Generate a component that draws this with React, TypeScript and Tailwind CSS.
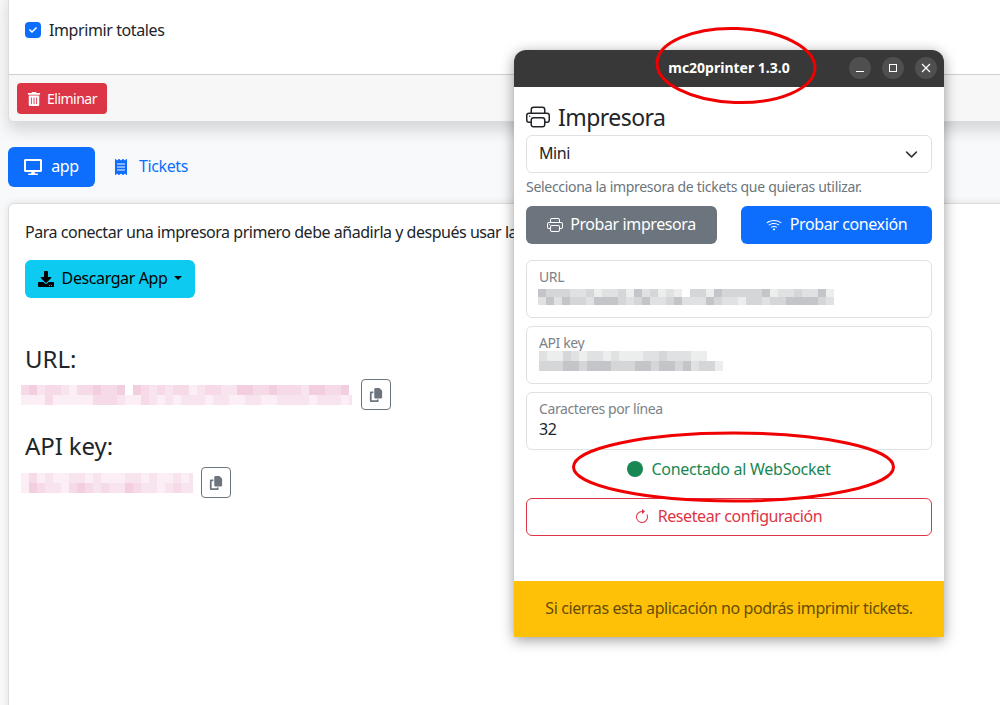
import React from 'react';
import { BsArrowClockwise, BsPrinter, BsWifi } from 'react-icons/bs';
import { FaCheck, FaDesktop, FaDownload, FaReceipt, FaTrashAlt } from 'react-icons/fa';
import { FaCopy } from 'react-icons/fa6';

const PINK = ['#ffffff', '#fbeff5', '#f8e4ee', '#f6dae8', '#f3cde0'];
const GRAY = ['#ffffff', '#eceded', '#e0e1e3', '#d4d6d8', '#c4c5c8'];

const URL_PINK = [
    '3423321334334' + '0' + '432323312332244334333244334',
    '111311111333211321212221221122112222122212',
];
const KEY_PINK = [
    '13121122121112212112121',
    '14322134323224322123223',
];
const URL_GRAY = [
    '4333223122314231210331433333412232241',
    '2424332444323422342224322133233444432',
];
const KEY_GRAY = [
    '21132122121112232221100',
    '33344344433344344342331',
];

// blurred-out values in the screenshot
function Pixelated({ rows, palette, rowHeight, className }: { rows: string[]; palette: string[]; rowHeight: number; className?: string }) {
    return (
        <div className={`shrink-0 overflow-hidden ${className ?? ''}`}>
            {rows.map((row, r) => (
                <div key={r} className="flex">
                    {row.split('').map((c, i) => (
                        <div key={i} className="w-2 shrink-0" style={{ height: rowHeight, backgroundColor: palette[Number(c)] }} />
                    ))}
                </div>
            ))}
        </div>
    );
}

function CopyButton() {
    return (
        <button className="flex h-[31px] w-[30px] shrink-0 items-center justify-center rounded border border-[#6c757d] text-[#6c757d]">
            <FaCopy className="size-[14px]" />
        </button>
    );
}

function FloatingField({ label, children }: { label: string; children: React.ReactNode }) {
    return (
        <div className="h-[58px] rounded-md border border-[#dee2e6] px-3 pt-[6px]">
            <div className="text-sm leading-5 text-[#7d8287]">{label}</div>
            {children}
        </div>
    );
}

function Printer20Window() {
    return (
        <div className="absolute left-[514px] top-[50px] flex h-[587px] w-[430px] flex-col overflow-hidden rounded-t-xl bg-white shadow-[0_3px_14px_rgba(0,0,0,0.4)]">
            <div className="relative flex h-[37px] shrink-0 items-center justify-center bg-[#383838]">
                <span className="pb-px text-sm font-bold tracking-normal text-white">mc20printer 1.3.0</span>
                <div className="absolute right-[7px] top-[7px] flex gap-[11px]">
                    <div className="flex size-[22px] items-center justify-center rounded-full bg-[#4f4f4f]">
                        <div className="mt-[7px] h-px w-2 bg-white" />
                    </div>
                    <div className="flex size-[22px] items-center justify-center rounded-full bg-[#4f4f4f]">
                        <div className="size-2 border border-white" />
                    </div>
                    <div className="flex size-[22px] items-center justify-center rounded-full bg-[#4f4f4f]">
                        <svg viewBox="0 0 10 10" className="size-[10px]" stroke="white" strokeWidth="1.2"><path d="M1 1l8 8M9 1l-8 8" /></svg>
                    </div>
                </div>
            </div>

            <div className="flex flex-1 flex-col px-3">
                <div className="mt-[14px] flex h-8 items-center gap-2">
                    <BsPrinter className="size-6 text-[#212529]" />
                    <span className="text-[23px] leading-8 tracking-[-0.55px] text-[#212529]">Impresora</span>
                </div>
                <div className="mt-[2px] flex h-[38px] items-center justify-between rounded-md border border-[#dee2e6] pb-[2px] pl-3 pr-[13px] text-[#212529]">
                    <span>Mini</span>
                    <svg viewBox="0 0 16 16" className="mt-[2px] size-[13px]" fill="none" stroke="#343a40" strokeWidth="2" strokeLinecap="round" strokeLinejoin="round"><path d="m2 5 6 6 6-6" /></svg>
                </div>
                <p className="mt-[4px] text-sm leading-5 tracking-[-0.3px] text-[#6c757d]">Selecciona la impresora de tickets que quieras utilizar.</p>
                <div className="mt-[9px] grid grid-cols-2 gap-6">
                    <button className="flex h-[38px] items-center justify-center gap-[7px] rounded-md bg-[#6c757d] pb-[2px] text-white">
                        <BsPrinter className="mt-[2px] size-4" /> Probar impresora
                    </button>
                    <button className="flex h-[38px] items-center justify-center gap-2 rounded-md bg-[#0d6efd] pb-[2px] text-white">
                        <BsWifi className="mt-[2px] size-4" /> Probar conexión
                    </button>
                </div>
                <div className="mt-4 flex flex-col gap-2">
                    <FloatingField label="URL">
                        <Pixelated rows={URL_GRAY} palette={GRAY} rowHeight={8} className="-ml-px mt-[2px]" />
                    </FloatingField>
                    <FloatingField label="API key">
                        <Pixelated rows={KEY_GRAY} palette={GRAY} rowHeight={10} className="-mt-[2px]" />
                    </FloatingField>
                    <FloatingField label="Caracteres por línea">
                        <div className="leading-5 text-[#212529]">32</div>
                    </FloatingField>
                </div>
                <div className="mt-[7px] flex h-[24px] items-center justify-center gap-2 tracking-[-0.27px] text-[#198754]">
                    <div className="size-4 rounded-full bg-[#198754]" />
                    <span>Conectado al WebSocket</span>
                </div>
                <button className="mt-[17px] flex h-[38px] items-center justify-center gap-2 rounded-md border border-[#dc3545] pb-[2px] pr-[2px] text-[#dc3545]">
                    <BsArrowClockwise className="mt-[2px] size-4" /> Resetear configuración
                </button>
            </div>

            <div className="flex h-14 shrink-0 items-center justify-center bg-[#ffc107] pb-[2px] text-[#664d03]">
                Si cierras esta aplicación no podrás imprimir tickets.
            </div>
        </div>
    );
}

export default function App() {
    return (
        <div className="relative h-[705px] w-[1000px] overflow-hidden bg-[#f8f9fa] pl-2 font-['Noto_Sans',sans-serif] tracking-[-0.4px] text-[#212529]">
            <div className="-mt-[10px] h-[132px] w-[1040px] rounded-md border border-[#dcdcdc] bg-white shadow-[0_8px_16px_rgba(0,0,0,0.15)]">
                <div className="flex h-[83px] items-center gap-2 pb-[6px] pl-4">
                    <div className="flex size-4 items-center justify-center rounded-[4px] bg-[#0d6efd]">
                        <FaCheck className="size-2 text-white" />
                    </div>
                    <span>Imprimir totales</span>
                </div>
                <div className="h-[47px] rounded-b-md border-t border-[#cfcfcf] bg-[#f7f7f7] px-2 pt-2">
                    <button className="flex h-[31px] w-[90px] items-center justify-center gap-[6px] rounded bg-[#dc3545] text-sm tracking-[-0.5px] text-white">
                        <FaTrashAlt className="size-[14px]" /> Eliminar
                    </button>
                </div>
            </div>

            <div className="mt-[25px] flex h-10 items-center gap-[18px]">
                <div className="flex h-10 w-[87px] items-center justify-center gap-[9px] rounded-md bg-[#0d6efd] pb-[2px] text-white">
                    <FaDesktop className="mt-[2px] size-[18px]" /> app
                </div>
                <div className="flex items-center gap-[10px] pb-[2px] text-[#0d6efd]">
                    <FaReceipt className="mt-[2px] size-4" /> Tickets
                </div>
            </div>

            <div className="mt-4 h-[520px] w-[1040px] rounded-md border border-[#dcdcdc] bg-white px-4 pt-4 shadow-[0_0_8px_rgba(0,0,0,0.1)]">
                <p className="leading-6 tracking-[-0.47px]">Para conectar una impresora primero debe añadirla y después usar la</p>
                <button className="mt-[16px] flex h-[38px] w-[170px] items-center justify-center gap-2 rounded-md bg-[#0dcaf0] pb-[2px] text-black">
                    <FaDownload className="mt-[2px] size-4" /> Descargar App
                    <span className="-ml-px border-x-4 border-t-4 border-x-transparent border-t-black" />
                </button>
                <h4 className="mt-[47px] text-2xl leading-7 tracking-normal">URL:</h4>
                <div className="-ml-1 mt-[6px] flex items-center gap-[9px]">
                    <Pixelated rows={URL_PINK} palette={PINK} rowHeight={10} className="w-[331px]" />
                    <CopyButton />
                </div>
                <h4 className="mt-[22px] text-2xl leading-7 tracking-[-0.1px]">API key:</h4>
                <div className="-ml-1 mt-[7px] flex items-center gap-2">
                    <Pixelated rows={KEY_PINK} palette={PINK} rowHeight={10} className="w-[172px]" />
                    <CopyButton />
                </div>
            </div>

            <Printer20Window />

            {/* hand-drawn red annotation rings */}
            <svg className="pointer-events-none absolute left-0 top-0" width="1000" height="705" fill="none" stroke="#f00000" strokeWidth="3">
                <ellipse cx="736" cy="65.5" rx="79" ry="37" transform="rotate(2 736 65.5)" />
                <ellipse cx="733.5" cy="467" rx="160" ry="34" />
            </svg>
        </div>
    );
}
